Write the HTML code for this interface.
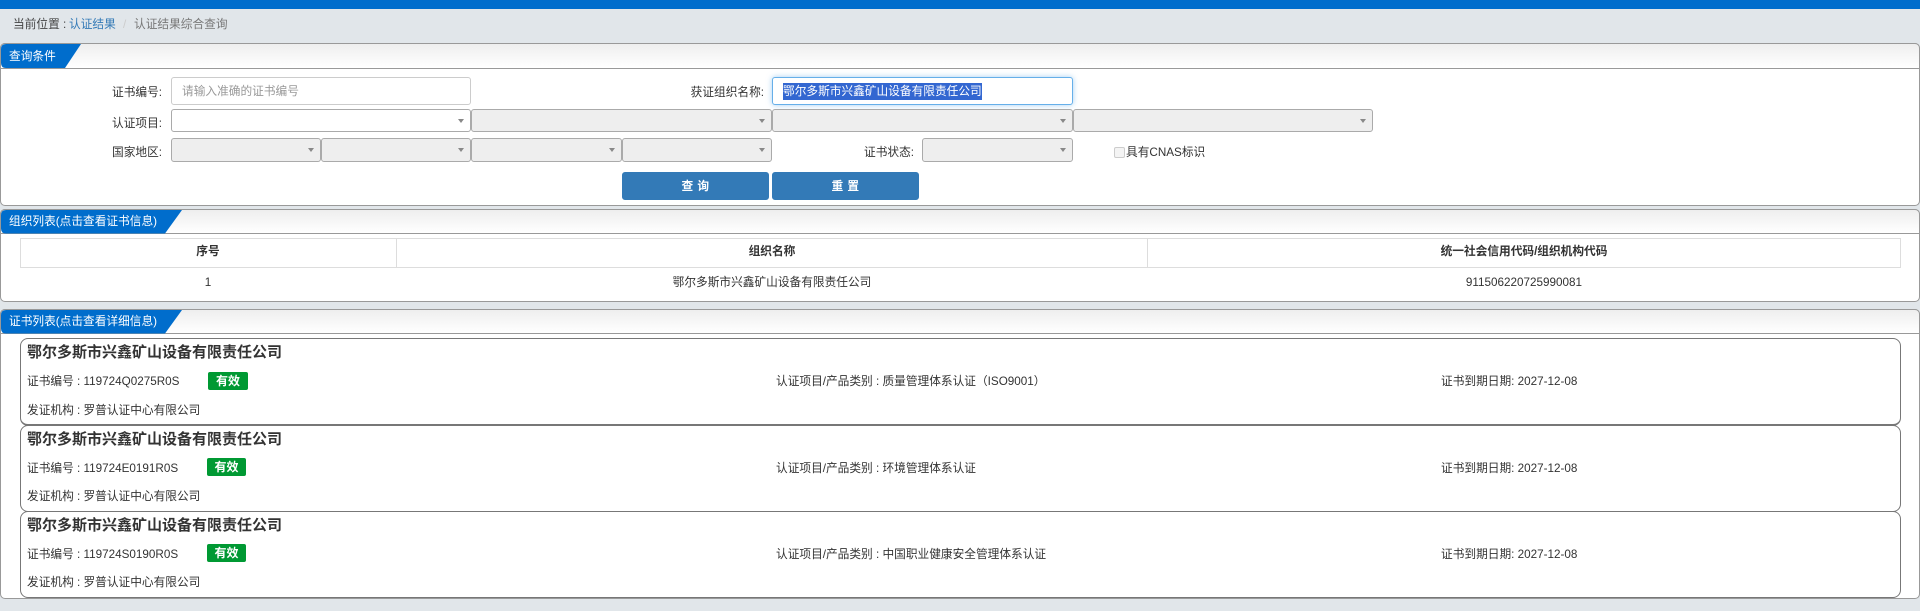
<!DOCTYPE html>
<html lang="zh">
<head>
<meta charset="utf-8">
<title>认证结果综合查询</title>
<style>
html,body{margin:0;padding:0;width:1920px;height:611px;overflow:hidden;background:#e1e6ea;}
body{position:relative;font-family:"Liberation Sans","Noto Sans CJK SC",sans-serif;font-size:11.7px;color:#333;}
.a{position:absolute;box-sizing:border-box;}
.t{position:absolute;white-space:nowrap;line-height:16px;height:16px;}
.c{transform:translateX(-50%);}
.r{text-align:right;}
.panel{position:absolute;left:0;width:1920px;box-sizing:border-box;background:#fff;border:1px solid #999;border-radius:5px;}
.hd{position:absolute;left:0;width:1920px;box-sizing:border-box;background:linear-gradient(#eee,#fff);border:1px solid #999;border-radius:5px 5px 0 0;}
.sel{position:absolute;box-sizing:border-box;border:1px solid #aaa;border-radius:3px;background:#eee;}
.sel.w{background:#fff;}
.sel:after{content:"";position:absolute;right:6px;top:50%;margin-top:-2px;border-left:3px solid transparent;border-right:3px solid transparent;border-top:4px solid #888;}
.tab{position:absolute;left:0;}
.tt{position:absolute;white-space:nowrap;color:#fff;line-height:16px;height:16px;left:9px;font-size:11.7px;}
.btn{position:absolute;box-sizing:border-box;background:#337ab7;border:1px solid #337ab7;border-radius:3px;color:#fff;text-align:center;line-height:27px;height:28px;top:172px;font-weight:bold;letter-spacing:.5px;}
.card{position:absolute;left:20px;width:1881px;box-sizing:border-box;background:#fff;border:1px solid #777;border-radius:8px;}
.title{font-size:15px;font-weight:bold;left:27px;color:#333;height:20px;line-height:20px;}
.badge{position:absolute;background:#009933;color:#fff;font-weight:bold;font-size:12px;text-align:center;height:18px;line-height:18px;border-radius:2px;}
</style>
</head>
<body>
<div class="a" style="left:0;top:0;width:1920px;height:9px;background:#006dcc;"></div>

<div class="t" style="left:13px;top:17px;color:#444;">当前位置 :</div>
<div class="t" style="left:69px;top:17px;color:#337ab7;">认证结果</div>
<div class="t" style="left:123px;top:17px;color:#ccc;">/</div>
<div class="t" style="left:134px;top:17px;color:#777;">认证结果综合查询</div>

<!-- Panel 1 -->
<div class="panel" style="top:43px;height:163px;"></div>
<div class="hd" style="top:43px;height:26px;"></div>
<svg class="tab" style="top:44px;" width="82" height="25"><path d="M6 0H81L65 24H6Q1 24 1 19V5Q1 0 6 0Z" fill="#006dcc"/></svg>
<div class="tt" style="top:49px;">查询条件</div>

<div class="t r" style="left:100px;width:62px;top:85px;">证书编号:</div>
<div class="a" style="left:171px;top:77px;width:300px;height:28px;border:1px solid #ccc;border-radius:3px;background:#fff;"></div>
<div class="t" style="left:182px;top:84px;color:#999;">请输入准确的证书编号</div>

<div class="t r" style="left:660px;width:104px;top:85px;">获证组织名称:</div>
<div class="a" style="left:772px;top:77px;width:301px;height:28px;border:1px solid #66afe9;border-radius:3px;background:#fff;box-shadow:0 0 6px rgba(102,175,233,.6);"></div>
<div class="t" style="left:783px;top:83px;height:17px;line-height:17px;background:#3367d1;color:#fff;">鄂尔多斯市兴鑫矿山设备有限责任公司</div>

<div class="t r" style="left:100px;width:62px;top:116px;">认证项目:</div>
<div class="sel w" style="left:171px;top:109px;width:300px;height:23px;"></div>
<div class="sel" style="left:471px;top:109px;width:301px;height:23px;"></div>
<div class="sel" style="left:772px;top:109px;width:301px;height:23px;"></div>
<div class="sel" style="left:1073px;top:109px;width:300px;height:23px;"></div>

<div class="t r" style="left:100px;width:62px;top:145px;">国家地区:</div>
<div class="sel" style="left:171px;top:138px;width:150px;height:24px;"></div>
<div class="sel" style="left:321px;top:138px;width:150px;height:24px;"></div>
<div class="sel" style="left:471px;top:138px;width:151px;height:24px;"></div>
<div class="sel" style="left:622px;top:138px;width:150px;height:24px;"></div>

<div class="t r" style="left:850px;width:64px;top:145px;">证书状态:</div>
<div class="sel" style="left:922px;top:138px;width:151px;height:24px;"></div>

<div class="a" style="left:1114px;top:147px;width:11px;height:11px;border:1px solid #ccc;border-radius:2px;background:#f4f4f4;"></div>
<div class="t" style="left:1126px;top:145px;">具有CNAS标识</div>

<div class="btn" style="left:622px;width:147px;">查 询</div>
<div class="btn" style="left:772px;width:147px;">重 置</div>

<!-- Panel 2 -->
<div class="panel" style="top:209px;height:93px;"></div>
<div class="hd" style="top:209px;height:25px;"></div>
<svg class="tab" style="top:210px;" width="184" height="24"><path d="M6 0H182L165 23.500H6Q1 23.500 1 18.500V5Q1 0 6 0Z" fill="#006dcc"/></svg>
<div class="tt" style="top:214px;">组织列表(点击查看证书信息)</div>

<div class="a" style="left:20px;top:238px;width:1881px;height:30px;border:1px solid #ddd;"></div>
<div class="a" style="left:396px;top:238px;width:1px;height:30px;background:#ddd;"></div>
<div class="a" style="left:1147px;top:238px;width:1px;height:30px;background:#ddd;"></div>
<div class="t c" style="left:208px;top:244px;font-weight:bold;">序号</div>
<div class="t c" style="left:772px;top:244px;font-weight:bold;">组织名称</div>
<div class="t c" style="left:1524px;top:244px;font-weight:bold;">统一社会信用代码/组织机构代码</div>
<div class="t c" style="left:208px;top:275px;">1</div>
<div class="t c" style="left:772px;top:275px;">鄂尔多斯市兴鑫矿山设备有限责任公司</div>
<div class="t c" style="left:1524px;top:275px;">911506220725990081</div>

<!-- Panel 3 -->
<div class="panel" style="top:309px;height:290px;"></div>
<div class="hd" style="top:309px;height:25px;"></div>
<svg class="tab" style="top:310px;" width="184" height="24"><path d="M6 0H182L165 23.500H6Q1 23.500 1 18.500V5Q1 0 6 0Z" fill="#006dcc"/></svg>
<div class="tt" style="top:314px;">证书列表(点击查看详细信息)</div>

<div class="card" style="top:338px;height:88px;border-bottom-width:2px;"></div>
<div class="card" style="top:425px;height:87px;"></div>
<div class="card" style="top:511px;height:87px;"></div>

<div class="t title" style="top:343px;">鄂尔多斯市兴鑫矿山设备有限责任公司</div>
<div class="t" style="left:27px;top:374px;">证书编号 : 119724Q0275R0S</div>
<div class="badge" style="left:208px;top:372px;width:40px;">有效</div>
<div class="t" style="left:776px;top:374px;">认证项目/产品类别 : 质量管理体系认证（ISO9001）</div>
<div class="t" style="left:1441px;top:374px;">证书到期日期: 2027-12-08</div>
<div class="t" style="left:27px;top:403px;">发证机构 : 罗普认证中心有限公司</div>

<div class="t title" style="top:430px;">鄂尔多斯市兴鑫矿山设备有限责任公司</div>
<div class="t" style="left:27px;top:461px;">证书编号 : 119724E0191R0S</div>
<div class="badge" style="left:207px;top:458px;width:39px;">有效</div>
<div class="t" style="left:776px;top:461px;">认证项目/产品类别 : 环境管理体系认证</div>
<div class="t" style="left:1441px;top:461px;">证书到期日期: 2027-12-08</div>
<div class="t" style="left:27px;top:489px;">发证机构 : 罗普认证中心有限公司</div>

<div class="t title" style="top:516px;">鄂尔多斯市兴鑫矿山设备有限责任公司</div>
<div class="t" style="left:27px;top:547px;">证书编号 : 119724S0190R0S</div>
<div class="badge" style="left:207px;top:544px;width:39px;">有效</div>
<div class="t" style="left:776px;top:547px;">认证项目/产品类别 : 中国职业健康安全管理体系认证</div>
<div class="t" style="left:1441px;top:547px;">证书到期日期: 2027-12-08</div>
<div class="t" style="left:27px;top:575px;">发证机构 : 罗普认证中心有限公司</div>
</body>
</html>
